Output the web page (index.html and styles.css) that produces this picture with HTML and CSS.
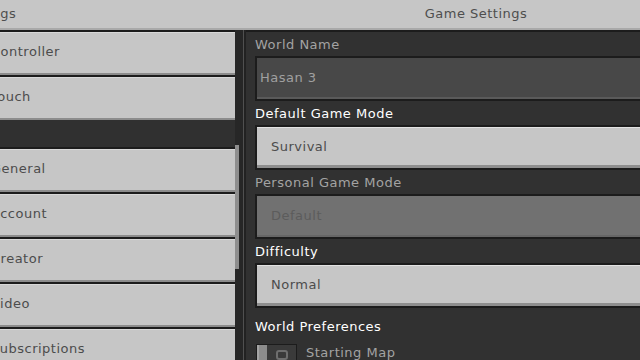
FILE: index.html
```html
<!DOCTYPE html>
<html lang="en">
<head>
  <meta charset="UTF-8">
  <meta name="viewport" content="width=device-width, initial-scale=1.0">
  <title>Game Settings</title>
  <link rel="stylesheet" href="styles.css">
</head>
<body>
  <div class="screen">
    <header class="topbar">
      <div class="topbar-left">Settings</div>
      <div class="topbar-title">Game Settings</div>
    </header>

    <div class="content">
      <nav class="sidebar">
        <div class="menu">
          <div class="menu-btn">Controller</div>
          <div class="menu-btn">Touch</div>
          <div class="menu-gap"></div>
          <div class="menu-btn">General</div>
          <div class="menu-btn">Account</div>
          <div class="menu-btn">Creator</div>
          <div class="menu-btn">Video</div>
          <div class="menu-btn">Subscriptions</div>
        </div>
        <div class="scroll-track">
          <div class="scroll-thumb"></div>
        </div>
      </nav>

      <div class="divider"></div>

      <main class="panel">
        <div class="label disabled">World Name</div>
        <div class="field text-field">Hasan 3</div>

        <div class="label">Default Game Mode</div>
        <div class="field dropdown">Survival</div>

        <div class="label disabled">Personal Game Mode</div>
        <div class="field dropdown locked">Default</div>

        <div class="label">Difficulty</div>
        <div class="field dropdown">Normal</div>

        <div class="section-title">World Preferences</div>
        <div class="toggle-row">
          <div class="toggle">
            <div class="toggle-knob"></div>
            <div class="toggle-track">
              <svg width="12" height="10" viewBox="0 0 12 10">
                <rect x="1" y="1" width="10" height="8" rx="2" fill="none" stroke="#6e6e6e" stroke-width="2"/>
              </svg>
            </div>
          </div>
          <span class="toggle-text">Starting Map</span>
        </div>
      </main>
    </div>
  </div>
</body>
</html>
```

FILE: styles.css
```css
body {
  margin: 0;
  padding: 0;
  background: #2b2b2b;
  overflow: hidden;
  font-family: "DejaVu Sans", sans-serif;
  font-size: 13px;
  letter-spacing: 0.5px;
}

.screen {
  width: 754px;
  margin-left: -48px;
}

/* top bar */
.topbar {
  display: flex;
  height: 28px;
  line-height: 28px;
  background: #c6c6c6;
  color: #4e4e4e;
  border-bottom: 2px solid #a9a9a9;
}

.topbar-left {
  width: 288px;
  padding-left: 7px;
  box-sizing: border-box;
}

.topbar-title {
  flex: 1;
  text-align: center;
  padding-left: 6px;
}

.content {
  display: flex;
  height: 330px;
}

/* left menu */
.sidebar {
  display: flex;
  width: 288px;
  background: #303030;
}

.menu {
  width: 283px;
}

.menu-btn {
  height: 45px;
  line-height: 39px;
  box-sizing: border-box;
  padding-left: 39px;
  background: #c6c6c6;
  color: #4c4c4c;
  border-top: 2px solid #1c1c1c;
  box-shadow: inset 0 -2px #8c8c8c, inset 0 1px #d8d8d8;
}

.menu-gap {
  height: 27px;
  background: #303030;
}

.scroll-track {
  width: 5px;
  background: #272727;
}

.scroll-thumb {
  margin-top: 115px;
  height: 124px;
  width: 4px;
  background: #8e8e8e;
}

.divider {
  width: 6px;
  background: #222;
  border-left: 3px solid #262626;
  box-sizing: border-box;
  box-shadow: inset 1px 0 #505050;
}

/* right panel */
.panel {
  flex: 1;
  background: #313131;
  border-top: 2px solid #1c1c1c;
  padding-left: 9px;
}

.label {
  height: 24px;
  line-height: 26px;
  color: #fff;
}

.label.disabled {
  color: #a3a3a3;
}

.field {
  height: 45px;
  line-height: 39px;
  box-sizing: border-box;
  border: 2px solid #1c1c1c;
  border-right: none;
}

.text-field {
  background: #484848;
  color: #a0a0a0;
  padding-left: 3px;
  box-shadow: inset 0 -2px #5a5a5a;
}

.dropdown {
  background: #c6c6c6;
  color: #4c4c4c;
  padding-left: 14px;
  box-shadow: inset 0 -3px #8e8e8e, inset 0 1px #e2e2e2;
}

.dropdown.locked {
  background: #717171;
  color: #5c5c5c;
  box-shadow: inset 0 -2px #666;
}

.section-title {
  margin-top: 7px;
  height: 24px;
  line-height: 24px;
  color: #fff;
}

.toggle-row {
  display: flex;
  align-items: flex-start;
  margin-top: 5px;
  gap: 9px;
}

.toggle {
  display: flex;
  height: 20px;
  border: 1px solid #1c1c1c;
  margin-left: 1px;
}

.toggle-knob {
  width: 10px;
  background: #8c8c8c;
  box-shadow: inset 2px 0 #a4a4a4;
}

.toggle-track {
  width: 29px;
  background: #3a3a3a;
  display: flex;
  justify-content: center;
  padding-top: 5px;
  box-sizing: border-box;
}

.toggle-text {
  color: #a3a3a3;
  line-height: 18px;
}
```
